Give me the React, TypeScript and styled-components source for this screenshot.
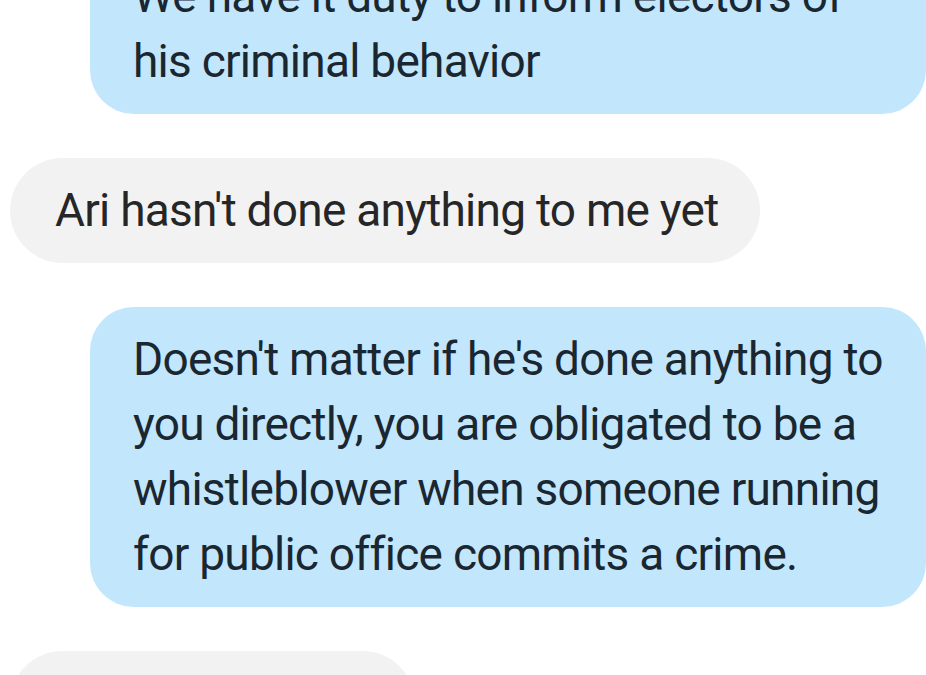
import React from "react"
import styled, { createGlobalStyle } from "styled-components"

const GlobalStyle = createGlobalStyle`
  html, body {
    margin: 0;
    padding: 0;
    background: #ffffff;
    overflow: hidden;
  }
  body {
    font-family: Roboto, "Noto Sans", "Liberation Sans", sans-serif;
  }
`

type Message = {
  id: number
  mine: boolean
  text: string
}

const messages: Message[] = [
  { id: 1, mine: true, text: "We have it duty to inform electors of his criminal behavior" },
  { id: 2, mine: false, text: "Ari hasn't done anything to me yet" },
  {
    id: 3,
    mine: true,
    text: "Doesn't matter if he's done anything to you directly, you are obligated to be a whistleblower when someone running for public office commits a crime.",
  },
  { id: 4, mine: false, text: "It's not my place" },
]

const Thread = styled.div`
  width: 926px;
  height: 675px;
  overflow: hidden;
`

const Scroller = styled.div`
  display: flex;
  flex-direction: column;
  gap: 44px;
  margin-top: -56px;
`

const Row = styled.div<{ $mine: boolean }>`
  display: flex;
  justify-content: ${(p) => (p.$mine ? "flex-end" : "flex-start")};
  padding-left: ${(p) => (p.$mine ? "90px" : "10px")};
`

const Bubble = styled.div<{ $mine: boolean }>`
  box-sizing: border-box;
  max-width: ${(p) => (p.$mine ? "836px" : "760px")};
  width: ${(p) => (p.$mine ? "836px" : "auto")};
  padding: 20px ${(p) => (p.$mine ? "36px" : "42px")} 20px ${(p) => (p.$mine ? "43px" : "45px")};
  border-radius: ${(p) => (p.$mine ? "44px" : "54px")};
  background: ${(p) => (p.$mine ? "#c2e6fc" : "#f2f2f2")};
  color: ${(p) => (p.$mine ? "#1a2731" : "#262626")};
  font-size: 46px;
  font-weight: 400;
  line-height: 65px;
  letter-spacing: -0.75px;
`

export default function App() {
  return (
    <>
      <GlobalStyle />
      <Thread>
        <Scroller>
          {messages.map((m) => (
            <Row key={m.id} $mine={m.mine}>
              <Bubble $mine={m.mine}>{m.text}</Bubble>
            </Row>
          ))}
        </Scroller>
      </Thread>
    </>
  )
}
